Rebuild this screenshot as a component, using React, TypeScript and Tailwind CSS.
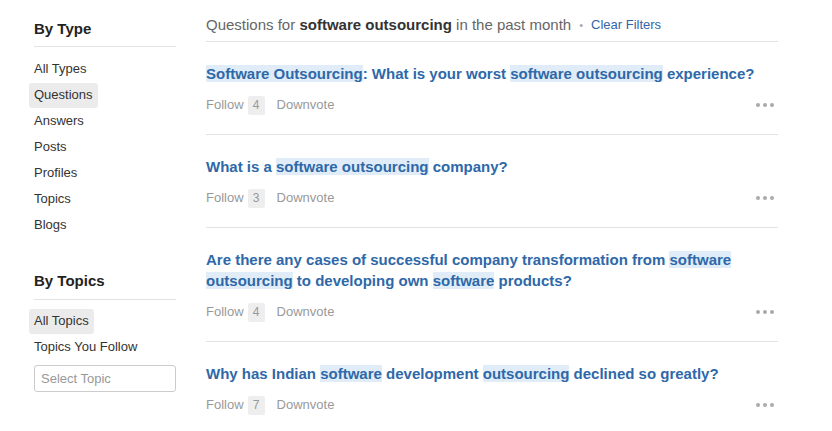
const questions: { parts: (string | [string])[]; follow: number }[] = [
  {
    parts: [["Software Outsourcing"], ": What is your worst ", ["software outsourcing"], " experience?"],
    follow: 4,
  },
  { parts: ["What is a ", ["software outsourcing"], " company?"], follow: 3 },
  {
    parts: [
      "Are there any cases of successful company transformation from ",
      ["software"],
      " ",
      ["outsourcing"],
      " to developing own ",
      ["software"],
      " products?",
    ],
    follow: 4,
  },
  {
    parts: ["Why has Indian ", ["software"], " development ", ["outsourcing"], " declined so greatly?"],
    follow: 7,
  },
];

const types = ["All Types", "Questions", "Answers", "Posts", "Profiles", "Topics", "Blogs"];

function SideItem({ label, active }: { label: string; active?: boolean }) {
  return (
    <div className="h-[26px] flex items-center">
      <span
        className={
          active
            ? "bg-[#ebebeb] rounded-[3px] px-[5px] -mx-[5px] h-[25px] flex items-center"
            : "flex items-center"
        }
      >
        {label}
      </span>
    </div>
  );
}

export default function App() {
  return (
    <div className="w-[832px] h-[431px] bg-white overflow-hidden font-['Liberation_Sans',Arial,sans-serif] flex">
      {/* Sidebar */}
      <aside className="w-[142px] ml-[34px] pt-[18px] text-[13px] text-[#333]">
        <h3 className="text-[15px] font-bold text-[#222] h-[22px] leading-[22px]">By Type</h3>
        <div className="h-px bg-[#e2e2e2] mt-[6px] mb-[9px]" />
        {types.map((t) => (
          <SideItem key={t} label={t} active={t === "Questions"} />
        ))}
        <h3 className="text-[15px] font-bold text-[#222] h-[22px] leading-[22px] mt-[32px]">By Topics</h3>
        <div className="h-px bg-[#e2e2e2] mt-[7px] mb-[8px]" />
        <SideItem label="All Topics" active />
        <SideItem label="Topics You Follow" />
        <div className="mt-[5px] h-[27px] border border-[#ccc] rounded-[3px] px-[6px] flex items-center text-[#999]">
          Select Topic
        </div>
      </aside>

      {/* Main */}
      <main className="ml-[30px] w-[572px] pt-[14px]">
        <div className="h-[22px] flex items-center text-[15px] text-[#666]">
          <span>
            Questions for <b className="text-[#333]">software outsourcing</b> in the past month
          </span>
          <span className="mx-[8px] text-[#aaa] text-[11px]">•</span>
          <span className="text-[13px] text-[#3366a8]">Clear Filters</span>
        </div>
        <div className="h-px bg-[#e2e2e2] mt-[5px]" />
        {questions.map((q, i) => (
          <div key={i} className={i < questions.length - 1 ? "border-b border-[#e2e2e2]" : ""}>
            <div className="pt-[21px] text-[15px] leading-[21px] font-bold text-[#2e68a8]">
              {q.parts.map((p, j) =>
                typeof p === "string" ? (
                  <span key={j}>{p}</span>
                ) : (
                  <span key={j} className="bg-[#e0edf8]">
                    {p[0]}
                  </span>
                )
              )}
            </div>
            <div className="mt-[11px] mb-[19px] h-[20px] flex items-center text-[13px] text-[#999]">
              <span>Follow</span>
              <span className="ml-[4px] bg-[#eee] text-[#999] rounded-[2px] w-[17px] h-[19px] flex items-center justify-center text-[12px]">
                {q.follow}
              </span>
              <span className="ml-[12px]">Downvote</span>
              <span className="ml-auto flex gap-[3px] mr-[4px]">
                <span className="w-[4px] h-[4px] rounded-full bg-[#aaa]" />
                <span className="w-[4px] h-[4px] rounded-full bg-[#aaa]" />
                <span className="w-[4px] h-[4px] rounded-full bg-[#aaa]" />
              </span>
            </div>
          </div>
        ))}
      </main>
    </div>
  );
}
